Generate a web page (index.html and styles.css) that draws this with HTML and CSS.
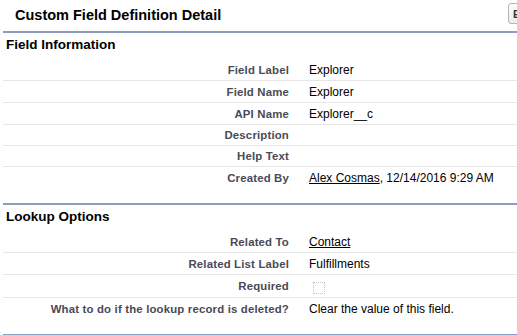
FILE: index.html
```html
<!DOCTYPE html>
<html>
<head>
<meta charset="utf-8">
<link rel="stylesheet" href="styles.css">
</head>
<body>
<div class="page-header">
  <h2 class="page-title">Custom Field Definition Detail</h2>
  <button class="btn" type="button">Edit</button>
</div>
<div class="page-block">
  <section class="section">
    <h3 class="section-title">Field Information</h3>
    <div class="row"><div class="label">Field Label</div><div class="value">Explorer</div></div>
    <div class="row"><div class="label">Field Name</div><div class="value">Explorer</div></div>
    <div class="row"><div class="label">API Name</div><div class="value">Explorer__c</div></div>
    <div class="row"><div class="label">Description</div><div class="value"></div></div>
    <div class="row"><div class="label">Help Text</div><div class="value"></div></div>
    <div class="row last"><div class="label">Created By</div><div class="value"><a href="#">Alex Cosmas</a>, 12/14/2016 9:29 AM</div></div>
  </section>
  <section class="section">
    <h3 class="section-title">Lookup Options</h3>
    <div class="row"><div class="label">Related To</div><div class="value"><a href="#">Contact</a></div></div>
    <div class="row"><div class="label">Related List Label</div><div class="value">Fulfillments</div></div>
    <div class="row"><div class="label">Required</div><div class="value"><span class="checkbox"></span></div></div>
    <div class="row last"><div class="label">What to do if the lookup record is deleted?</div><div class="value">Clear the value of this field.</div></div>
  </section>
</div>
</body>
</html>
```
FILE: styles.css
```css
html, body {
  margin: 0;
  padding: 0;
  background: #fff;
  overflow: hidden;
}
body {
  font-family: "Liberation Sans", Arial, sans-serif;
  color: #000;
}
.page-header {
  display: flex;
  align-items: flex-start;
  height: 31px;
  overflow: hidden;
}
.page-title {
  margin: 0;
  padding: 6px 0 0 15px;
  font-size: 14.5px;
  line-height: 18px;
  font-weight: bold;
  color: #000;
}
.btn {
  margin-left: auto;
  margin-right: -31px;
  margin-top: 3px;
  width: 40px;
  height: 21px;
  padding: 0 0 0 4px;
  text-align: left;
  border: 1px solid #b5b5b5;
  border-radius: 3px;
  background: linear-gradient(#fdfdfd, #ececec);
  font-family: "Liberation Sans", Arial, sans-serif;
  font-size: 11px;
  font-weight: bold;
  color: #333;
}
.page-block {
  margin-left: 3px;
  border-bottom: 2px solid #8e9dbe;
}
.section {
  border-top: 2px solid #8e9dbe;
  padding-bottom: 15px;
}
.section-title {
  margin: 0;
  padding: 4px 0 6px 3px;
  font-size: 13.5px;
  line-height: 16px;
  font-weight: bold;
  color: #000;
}
.row {
  display: grid;
  grid-template-columns: 296px 1fr;
  align-items: baseline;
  padding: 4px 0 3px;
  border-bottom: 1px solid #e6e6e6;
}
.row.last {
  border-bottom: none;
}
.label {
  padding-right: 10px;
  text-align: right;
  font-size: 11.4px;
  line-height: 13px;
  font-weight: bold;
  letter-spacing: 0.17px;
  color: #4a4a56;
}
.value {
  padding-left: 10px;
  font-size: 12px;
  line-height: 14px;
  color: #000;
}
.value a {
  color: #000;
  text-decoration: underline;
}
.checkbox {
  display: inline-block;
  box-sizing: border-box;
  width: 12px;
  height: 12px;
  margin-left: 4px;
  border: 1px dotted #c4c4c4;
  vertical-align: -4px;
}
```
